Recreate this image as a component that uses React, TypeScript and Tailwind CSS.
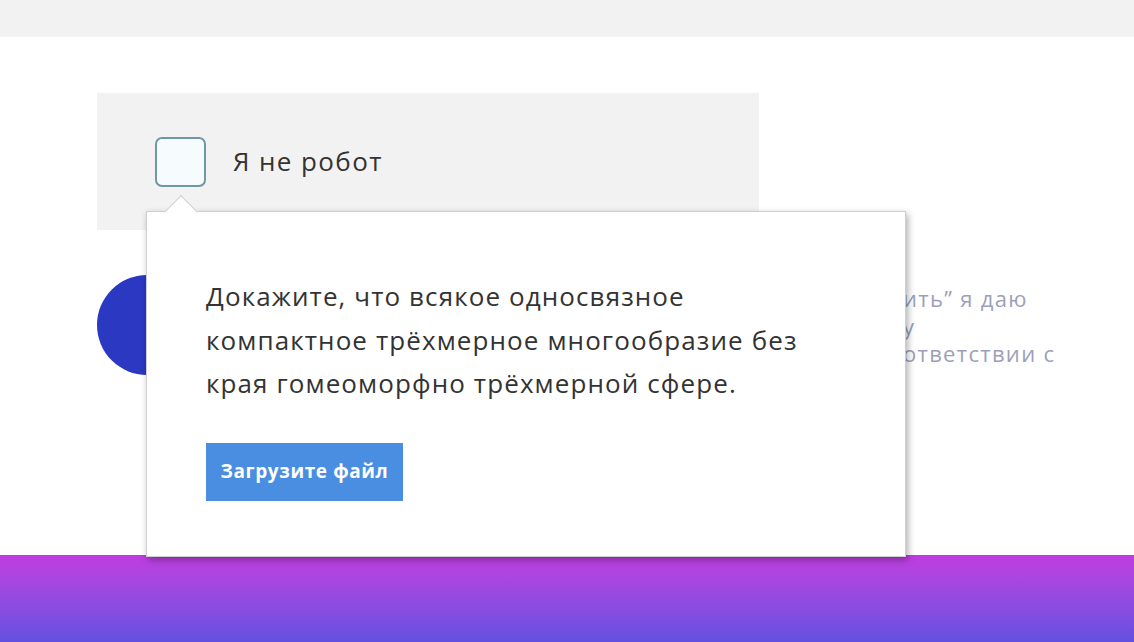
export default function App() {
  return (
    <div className="relative w-[1134px] h-[642px] overflow-hidden bg-white font-['Open_Sans','Noto_Sans',sans-serif] text-[#333]">
      {/* top strip */}
      <div className="h-[37px] bg-[#f2f2f2]" />

      <main className="relative h-[518px] pt-[56px]">
        {/* captcha box */}
        <div className="ml-[97px] flex h-[137px] w-[662px] items-center bg-[#f2f2f2] pl-[58px]">
          <div className="h-[50px] w-[51px] rounded-[7px] border-2 border-[#6f98a3] bg-[#f6fbfd]" />
          <span className="ml-[27px] text-[26px] tracking-[1.4px] text-[#333]">Я не робот</span>
        </div>

        {/* submit row, mostly hidden by the popup */}
        <div className="ml-[97px] mt-[45px] flex items-start">
          <button className="h-[100px] w-[380px] rounded-full bg-[#2b38c2]" />
          <div className="ml-[426px] mt-[10px] whitespace-nowrap text-[22px] leading-[27.5px] tracking-[1.3px] text-[#9d9fb8]">
            <div>ить” я даю</div>
            <div>у</div>
            <div>ответствии с</div>
          </div>
        </div>

        {/* popup */}
        <div className="absolute left-[146px] top-[174px] z-10 h-[346px] w-[760px] border border-[#cfcfcf] bg-white pl-[59px] pt-[63px] shadow-[2px_3px_7px_rgba(0,0,0,0.32)]">
          <div className="absolute -top-[12px] left-[22px] h-[24px] w-[24px] rotate-45 border-l border-t border-[#cfcfcf] bg-white" />
          <p className="text-[26px] leading-[43.5px] tracking-[1.1px] text-[#333]">
            Докажите, что всякое односвязное
            <br />
            компактное трёхмерное многообразие без
            <br />
            края гомеоморфно трёхмерной сфере.
          </p>
          <button className="mt-[37px] flex h-[58px] w-[197px] items-center justify-center bg-[#4a8ee2] text-[19px] font-bold tracking-[0.6px] text-white">
            Загрузите файл
          </button>
        </div>
      </main>

      {/* bottom gradient */}
      <footer className="h-[87px] bg-linear-to-b from-[#c03ce0] to-[#6350e0]" />
    </div>
  );
}
